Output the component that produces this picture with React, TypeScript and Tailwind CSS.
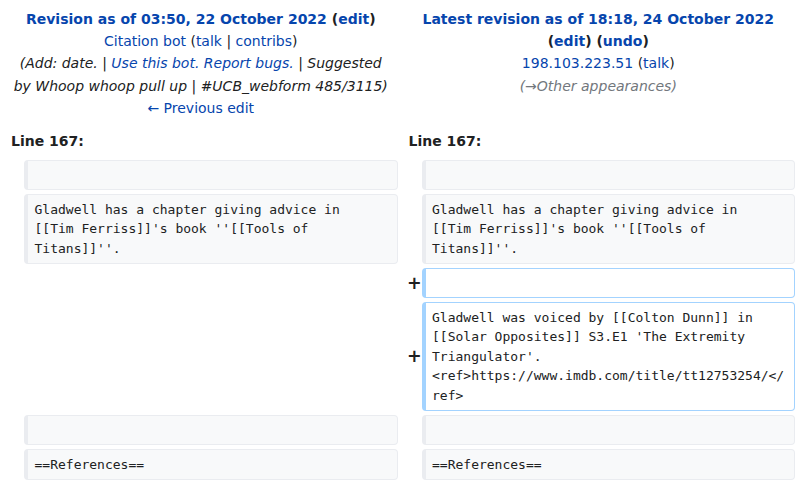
import React from 'react';

type Kind = 'context' | 'added';

interface Row {
  left: string[] | null;
  right: string[];
  kind: Kind;
}

const rows: Row[] = [
  { left: [''], right: [''], kind: 'context' },
  {
    left: ['Gladwell has a chapter giving advice in', "[[Tim Ferriss]]'s book ''[[Tools of", "Titans]]''."],
    right: ['Gladwell has a chapter giving advice in', "[[Tim Ferriss]]'s book ''[[Tools of", "Titans]]''."],
    kind: 'context',
  },
  { left: null, right: [''], kind: 'added' },
  {
    left: null,
    right: [
      'Gladwell was voiced by [[Colton Dunn]] in',
      "[[Solar Opposites]] S3.E1 'The Extremity",
      "Triangulator'.",
      '<ref>https://www.imdb.com/title/tt12753254/</',
      'ref>',
    ],
    kind: 'added',
  },
  { left: [''], right: [''], kind: 'context' },
  { left: ['==References=='], right: ['==References=='], kind: 'context' },
];

const A: React.FC<{ children: React.ReactNode }> = ({ children }) => (
  <a className="text-[#0645ad] cursor-pointer">{children}</a>
);

const Cell: React.FC<{ lines: string[]; kind: Kind }> = ({ lines, kind }) => {
  const colors =
    kind === 'added'
      ? 'border-[#a3d3ff] bg-white'
      : 'border-[#eaecf0] bg-[#f8f9fa]';
  return (
    <div
      className={`rounded-[4px] border border-l-4 ${colors} px-[6.5px] py-[4.5px] font-['DejaVu_Sans_Mono',monospace] text-[13px] leading-[19.5px] whitespace-pre text-[#202122]`}
    >
      {lines.map((l, i) => (
        <div key={i}>{l === '' ? <br /> : l}</div>
      ))}
    </div>
  );
};

const Marker: React.FC<{ show: boolean }> = ({ show }) => (
  <div className="flex items-center pl-[5.4px] font-bold text-[17.5px] leading-[1.2] text-[#202122] overflow-visible">
    {show ? <span className="whitespace-nowrap">+</span> : null}
  </div>
);

export default function App() {
  return (
    <div className="w-[799px] h-[484px] overflow-hidden bg-white font-['DejaVu_Sans',sans-serif] text-[14px] leading-[1.6] text-[#202122]">
      <div className="grid grid-cols-[16px_1fr_16px_1fr] gap-1 p-1">
        {/* Old revision header */}
        <div className="col-span-2 text-center px-[8px] pt-[3.5px]">
          <div className="font-bold">
            <A>Revision as of 03:50, 22 October 2022</A> (<A>edit</A>)
          </div>
          <div>
            <A>Citation bot</A> (<A>talk</A> | <A>contribs</A>)
          </div>
          <div className="italic">
            (Add: date. | <A>Use this bot.</A> <A>Report bugs.</A> | Suggested by Whoop whoop pull up | #UCB_webform 485/3115)
          </div>
          <div>
            <A>← Previous edit</A>
          </div>
        </div>

        {/* New revision header */}
        <div className="col-span-2 text-center px-[8px] pt-[3.5px]">
          <div className="font-bold">
            <A>Latest revision as of 18:18, 24 October 2022</A> (<A>edit</A>) (<A>undo</A>)
          </div>
          <div>
            <A>198.103.223.51</A> (<A>talk</A>)
          </div>
          <div className="italic text-[#72777d]">(→Other appearances)</div>
        </div>

        {/* Line numbers */}
        <div className="col-span-2 font-bold pl-[7px] pt-[7px] pb-[3px]">Line 167:</div>
        <div className="col-span-2 font-bold pl-[7px] pt-[7px] pb-[3px]">Line 167:</div>

        {rows.map((r, i) => (
          <React.Fragment key={i}>
            {r.left ? (
              <>
                <Marker show={false} />
                <Cell lines={r.left} kind="context" />
              </>
            ) : (
              <div className="col-span-2" />
            )}
            <Marker show={r.kind === 'added'} />
            <Cell lines={r.right} kind={r.kind} />
          </React.Fragment>
        ))}
      </div>
    </div>
  );
}
